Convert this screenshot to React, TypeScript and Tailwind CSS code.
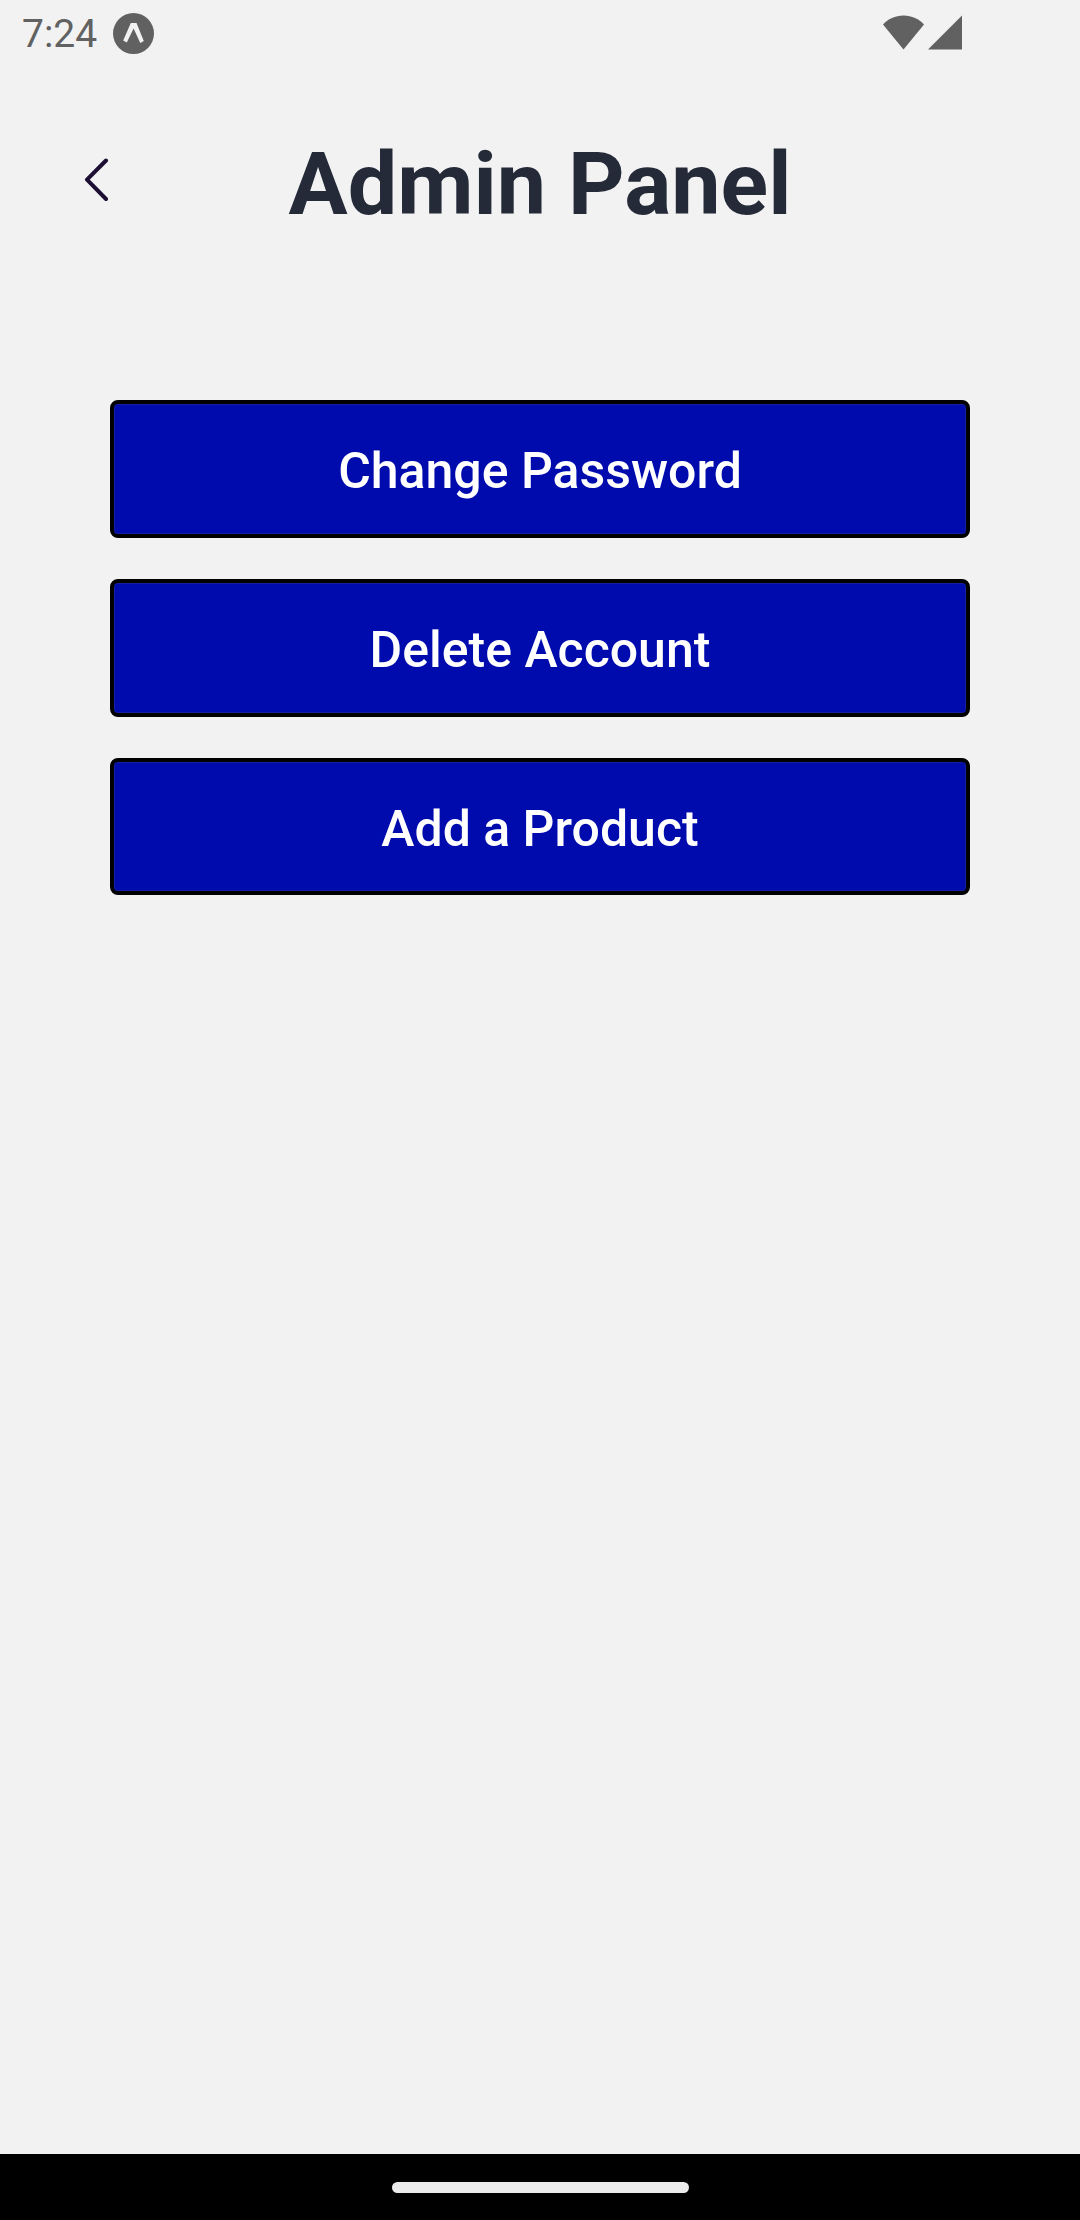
const actions = ["Change Password", "Delete Account", "Add a Product"];

export default function App() {
  return (
    <div className="flex h-[2220px] w-[1080px] flex-col bg-[#f2f2f2] font-[Roboto,sans-serif]">
      <header className="flex h-[67px] items-center justify-between pl-[22px] pr-[118px] text-[#616161]">
        <div className="flex items-center gap-[16px]">
          <span className="pt-[2px] text-[39px] leading-[65px]">7:24</span>
          <svg width="41" height="41" viewBox="0 0 41 41">
            <circle cx="20.5" cy="20.5" r="20.5" fill="currentColor" />
            <path
              d="M17.800 10H23.500L30.800 28L27.300 30L20.600 15.500L13.800 29.500L10.200 27.500Z"
              fill="#f2f2f2"
            />
          </svg>
        </div>
        <svg className="mb-[2px]" width="79" height="35" viewBox="0 0 79 35" fill="currentColor">
          <path d="M0 9.500C5 4 12 .5 20.500 .5S36 4 41 9.500L20.500 34.500Z" />
          <path d="M79 .5V34.500H45Z" />
        </svg>
      </header>
      <div className="grid h-[227px] grid-cols-[110px_1fr_110px] items-center">
        <svg
          className="mb-[2px] ml-[82px]"
          width="27"
          height="44"
          viewBox="0 0 27 44"
          fill="none"
          stroke="#1c0f33"
          strokeWidth="4"
          strokeLinecap="round"
          strokeLinejoin="round"
        >
          <path d="M24 2.500L5 21.700L24 41" />
        </svg>
        <h1 className="pt-[7px] text-center text-[88px] font-bold text-[#242a38]">Admin Panel</h1>
      </div>
      <main className="mt-[106px] flex flex-col gap-[41px] px-[110px]">
        {actions.map((action) => (
          <button
            key={action}
            className="h-[138px] rounded-lg border-4 border-black bg-[#000bae] pt-1 text-[50px] font-medium text-white shadow-[inset_0_0_0_1px_#1420a0] last:h-[137px] last:pt-[6px]"
          >
            {action}
          </button>
        ))}
      </main>
      <footer className="mt-auto flex h-[66px] items-center justify-center bg-black">
        <div className="h-[11px] w-[297px] rounded-full bg-[#ebebeb]" />
      </footer>
    </div>
  );
}
